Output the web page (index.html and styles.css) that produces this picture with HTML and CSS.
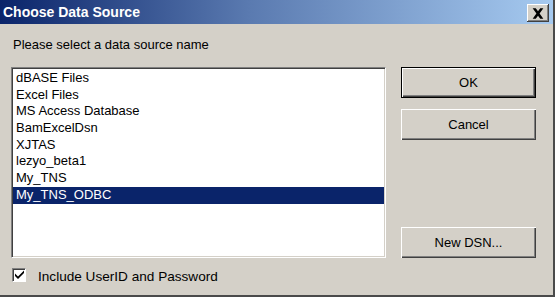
FILE: index.html
```html
<!DOCTYPE html>
<html lang="en">
<head>
  <meta charset="UTF-8" />
  <title>Choose Data Source</title>
  <link rel="stylesheet" href="styles.css">
</head>
<body>

  <div class="window">
    <!-- TITLE BAR -->
    <div class="titlebar">
      <span class="title">Choose Data Source</span>
      <span class="close-btn">
        <svg width="9" height="8" viewBox="0 0 9 8">
          <path d="M0.5 0h2.3l1.7 2.4L6.2 0h2.3L5.7 4l2.8 4H6.2L4.5 5.6L2.8 8H0.5l2.8-4z" fill="#000"/>
        </svg>
      </span>
    </div>

    <div class="content">
      <div class="prompt">Please select a data source name</div>

      <div class="main-row">
        <ul class="listbox">
          <li>dBASE Files</li>
          <li>Excel Files</li>
          <li>MS Access Database</li>
          <li>BamExcelDsn</li>
          <li>XJTAS</li>
          <li>lezyo_beta1</li>
          <li>My_TNS</li>
          <li class="selected">My_TNS_ODBC</li>
        </ul>

        <div class="buttons">
          <div class="btn default"><span>OK</span></div>
          <div class="btn">Cancel</div>
          <div class="btn bottom">New DSN...</div>
        </div>
      </div>

      <label class="check-row">
        <span class="checkbox">
          <svg width="9" height="9" viewBox="0 0 9 9">
            <path d="M0 3.5l3 3L9 0.5V3L3 9L0 6z" fill="#000"/>
          </svg>
        </span>
        Include UserID and Password
      </label>
    </div>
  </div>

</body>
</html>
```

FILE: styles.css
```css
body {
  margin: 0;
  background-color: #fff;
  font-family: 'Liberation Sans', Arial, sans-serif;
  font-size: 13px;
  color: #000;
}

.window {
  box-sizing: border-box;
  width: 555px;
  height: 297px;
  background-color: #d4d0c8;
  border-right: 2px solid #4a4a4a;
  border-bottom: 2px solid #4a4a4a;
  display: flex;
  flex-direction: column;
}

.titlebar {
  height: 24px;
  background: linear-gradient(to right, #0a246a, #5a7ab0 45%, #a6caf0);
  display: flex;
  align-items: center;
  justify-content: space-between;
  padding: 0 4px 0 3px;
}

.title {
  color: #fff;
  font-weight: bold;
  font-size: 14px;
  margin-top: -1px;
}

.close-btn {
  box-sizing: border-box;
  width: 22px;
  height: 18px;
  background-color: #d4d0c8;
  box-shadow: inset -1px -1px 0 #404040, inset 1px 1px 0 #fff, inset -2px -2px 0 #808080;
  display: flex;
  align-items: center;
  justify-content: center;
  margin-top: 2px;
}

.close-btn svg {
  width: 12px;
  height: 11px;
}

.content {
  flex: 1;
  padding: 13px 16px 0 11px;
  display: flex;
  flex-direction: column;
}

.prompt {
  height: 16px;
  line-height: 16px;
  padding-left: 2px;
  margin-bottom: 14px;
}

.main-row {
  display: flex;
  gap: 15px;
}

.listbox {
  box-sizing: border-box;
  width: 375px;
  height: 191px;
  margin: 0;
  padding: 2px 0 0 0;
  list-style: none;
  background-color: #fff;
  border: 1px solid;
  border-color: #808080 #fff #fff #808080;
  box-shadow: inset 1px 1px 0 #404040, inset -1px -1px 0 #d4d0c8;
}

.listbox li {
  height: 16.7px;
  line-height: 16.7px;
  padding-left: 3px;
  margin: 0 1px;
}

.listbox li.selected {
  background-color: #0a246a;
  color: #fff;
}

.buttons {
  width: 135px;
  display: flex;
  flex-direction: column;
  gap: 11px;
}

.btn {
  box-sizing: border-box;
  height: 31px;
  display: flex;
  align-items: center;
  justify-content: center;
  background-color: #d4d0c8;
  box-shadow: inset 1px 1px 0 #fff, inset -1px -1px 0 #404040, inset -2px -2px 0 #808080;
}

.btn.default {
  border: 1px solid #000;
}

.btn.bottom {
  margin-top: auto;
}

.check-row {
  display: flex;
  align-items: center;
  height: 20px;
  margin-top: 8px;
  padding-left: 1px;
  gap: 12px;
  font-size: 13.6px;
}

.checkbox {
  box-sizing: border-box;
  width: 14px;
  height: 14px;
  background-color: #fff;
  border: 1px solid;
  border-color: #808080 #fff #fff #808080;
  box-shadow: inset 1px 1px 0 #404040;
  display: flex;
  align-items: center;
  justify-content: center;
  margin-top: -3px;
}
```
